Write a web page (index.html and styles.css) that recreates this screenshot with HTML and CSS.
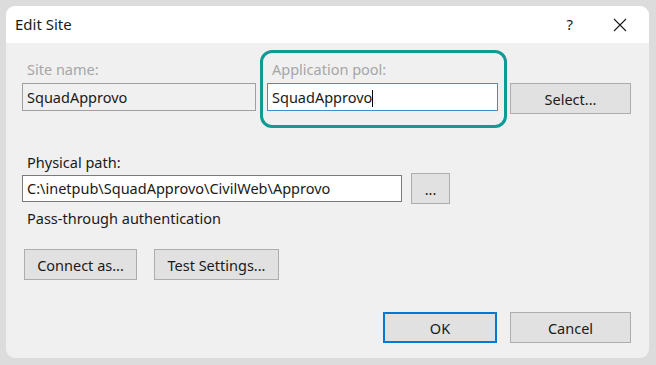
FILE: index.html
```html
<!DOCTYPE html>
<html>
<head>
    <title>Edit Site</title>
    <link rel="stylesheet" href="styles.css">
</head>
<body>
    <div class="window">
        <div class="titlebar">
            <span class="title">Edit Site</span>
            <div class="title-controls">
                <span class="help">?</span>
                <svg class="close" width="14" height="14" viewBox="0 0 14 14">
                    <path d="M1 1 L13 13 M13 1 L1 13" stroke="#1a1a1a" stroke-width="1.1" fill="none"/>
                </svg>
            </div>
        </div>

        <div class="content">
            <div class="site-row">
                <div class="field site-field">
                    <label class="disabled">Site name:</label>
                    <div class="input input-disabled">SquadApprovo</div>
                </div>
                <div class="field pool-field">
                    <label class="disabled">Application pool:</label>
                    <div class="input input-focus">SquadApprovo<span class="caret"></span></div>
                </div>
                <button class="select-btn">Select...</button>
            </div>

            <label class="path-label">Physical path:</label>
            <div class="path-row">
                <div class="input path-input">C:\inetpub\SquadApprovo\CivilWeb\Approvo</div>
                <button class="browse-btn">...</button>
            </div>
            <div class="auth-text">Pass-through authentication</div>

            <div class="auth-buttons">
                <button class="connect-btn">Connect as...</button>
                <button class="test-btn">Test Settings...</button>
            </div>

            <div class="dialog-buttons">
                <button class="ok-btn">OK</button>
                <button class="cancel-btn">Cancel</button>
            </div>
        </div>

        <!-- highlight around application pool -->
        <div class="highlight"></div>
    </div>
</body>
</html>
```

FILE: styles.css
```css
body {
    margin: 0;
    background-color: #dcdcdc;
    font-family: "Noto Sans", "Open Sans", sans-serif;
    font-size: 14.5px;
    color: #1a1a1a;
}
.window {
    position: relative;
    margin: 6px;
    width: 643px;
    height: 352px;
    background-color: #f0f0f0;
    border-radius: 9px;
    overflow: hidden;
}
.titlebar {
    height: 37px;
    background-color: #ffffff;
    display: flex;
    align-items: center;
    justify-content: space-between;
    padding-left: 9px;
}
.title {
    font-size: 15px;
    margin-top: -2px;
}
.title-controls {
    display: flex;
    align-items: center;
    gap: 40px;
    padding-right: 22px;
}
.help {
    font-size: 15px;
    margin-top: -2px;
}
.close {
    display: block;
}
.content {
    padding: 17px 18px 0 16px;
}
.site-row {
    display: flex;
    align-items: flex-start;
}
.field {
    display: flex;
    flex-direction: column;
}
.field label {
    height: 18px;
    line-height: 18px;
    margin-bottom: 5px;
    padding-left: 5px;
}
.site-field {
    width: 234px;
}
.pool-field {
    width: 231px;
    margin-left: 11px;
}
.disabled {
    color: #a6a6a6;
}
.input {
    box-sizing: border-box;
    height: 28px;
    line-height: 26px;
    padding-left: 4px;
    border: 1px solid #7a7a7a;
    background-color: #ffffff;
    white-space: nowrap;
    overflow: hidden;
}
.input-disabled {
    background-color: #f0f0f0;
    border-color: #a0a0a0;
}
.input-focus {
    border-color: #3c8fd8;
}
.caret {
    display: inline-block;
    width: 1px;
    height: 17px;
    background-color: #000000;
    vertical-align: -4px;
}
button {
    box-sizing: border-box;
    font-family: "Noto Sans", "Open Sans", sans-serif;
    font-size: 14.5px;
    color: #1a1a1a;
    background-color: #e1e1e1;
    border: 1px solid #adadad;
    padding: 0;
    height: 31px;
}
.select-btn {
    width: 121px;
    margin-left: 12px;
    margin-top: 23px;
}
.path-label {
    display: block;
    margin-top: 39px;
    height: 18px;
    line-height: 18px;
    padding-left: 5px;
}
.path-row {
    display: flex;
    align-items: center;
    margin-top: 2px;
}
.path-input {
    width: 380px;
    height: 27px;
    line-height: 25px;
}
.browse-btn {
    width: 39px;
    margin-left: 9px;
    line-height: 14px;
}
.auth-text {
    margin-top: 5px;
    height: 18px;
    line-height: 18px;
    padding-left: 5px;
}
.auth-buttons {
    display: flex;
    gap: 17px;
    margin-top: 22px;
    padding-left: 2px;
}
.connect-btn {
    width: 113px;
}
.test-btn {
    width: 125px;
}
.dialog-buttons {
    display: flex;
    justify-content: flex-end;
    gap: 13px;
    margin-top: 32px;
}
.ok-btn {
    width: 114px;
    border: 2px solid #0078d7;
}
.cancel-btn {
    width: 121px;
}
.highlight {
    position: absolute;
    left: 254px;
    top: 44px;
    width: 247px;
    height: 78px;
    box-sizing: border-box;
    border: 3px solid #0f9a94;
    border-radius: 12px;
}
```
